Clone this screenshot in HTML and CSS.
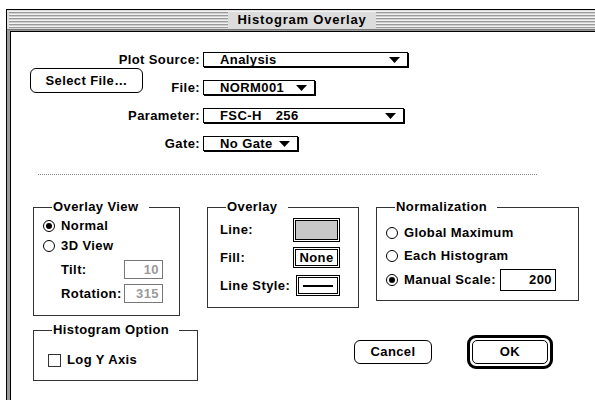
FILE: index.html
```html
<!DOCTYPE html>
<html lang="en">
<head>
<meta charset="utf-8">
<title>Histogram Overlay</title>
<link rel="stylesheet" href="styles.css">
</head>
<body>
<div class="window">
  <div class="titlebar">
    <div class="stripes"><span class="title">Histogram Overlay</span></div>
  </div>
  <div class="frame">
    <div class="content">
      <div class="sources">
        <div class="row">
          <div class="label-cell"><span class="label">Plot Source:</span></div>
          <div class="popup popup-source"><span class="popup-text">Analysis</span><svg class="arrow" width="11" height="6" viewBox="0 0 11 6"><path d="M0 0H11L5.5 6Z"/></svg></div>
        </div>
        <div class="row">
          <div class="label-cell"><div class="btn btn-select">Select File…</div><span class="label">File:</span></div>
          <div class="popup popup-file"><span class="popup-text">NORM001</span><svg class="arrow" width="11" height="6" viewBox="0 0 11 6"><path d="M0 0H11L5.5 6Z"/></svg></div>
        </div>
        <div class="row">
          <div class="label-cell"><span class="label">Parameter:</span></div>
          <div class="popup popup-param"><span class="popup-text wide-gap">FSC-H  256</span><svg class="arrow" width="11" height="6" viewBox="0 0 11 6"><path d="M0 0H11L5.5 6Z"/></svg></div>
        </div>
        <div class="row">
          <div class="label-cell"><span class="label">Gate:</span></div>
          <div class="popup popup-gate"><span class="popup-text">No Gate</span><svg class="arrow" width="11" height="6" viewBox="0 0 11 6"><path d="M0 0H11L5.5 6Z"/></svg></div>
        </div>
      </div>
      <div class="sep"></div>
      <div class="groups-top">
        <div class="group group-view">
          <span class="group-title">Overlay View</span>
          <div class="opt"><span class="radio on"></span>Normal</div>
          <div class="opt opt-2"><span class="radio"></span>3D View</div>
          <div class="field-row field-tilt"><span class="field-label">Tilt:</span><span class="field disabled">10</span></div>
          <div class="field-row field-rot"><span class="field-label">Rotation:</span><span class="field disabled">315</span></div>
        </div>
        <div class="group group-overlay">
          <span class="group-title">Overlay</span>
          <div class="sw-row sw-line"><span>Line:</span><span class="swatch"><span class="swatch-inner gray"></span></span></div>
          <div class="sw-row sw-fill"><span>Fill:</span><span class="swatch"><span class="swatch-inner">None</span></span></div>
          <div class="sw-row sw-style"><span>Line Style:</span><span class="swatch swatch-narrow"><span class="swatch-inner"><span class="line-sample"></span></span></span></div>
        </div>
        <div class="group group-norm">
          <span class="group-title">Normalization</span>
          <div class="opt"><span class="radio"></span>Global Maximum</div>
          <div class="opt opt-n2"><span class="radio"></span>Each Histogram</div>
          <div class="opt opt-n3"><span class="radio on"></span><span class="norm-label">Manual Scale:</span><span class="field scale">200</span></div>
        </div>
      </div>
      <div class="groups-bottom">
        <div class="group group-hist">
          <span class="group-title">Histogram Option</span>
          <div class="opt"><span class="checkbox"></span>Log Y Axis</div>
        </div>
        <div class="btn btn-cancel">Cancel</div>
        <div class="default-ring"><div class="btn btn-ok">OK</div></div>
      </div>
    </div>
  </div>
</div>
</body>
</html>
```

FILE: styles.css
```css
* { box-sizing: border-box; }
html, body { margin: 0; padding: 0; }
body {
  width: 595px;
  height: 400px;
  overflow: hidden;
  background: #fff;
  color: #000;
  font-family: "Liberation Sans", Arial, sans-serif;
  font-weight: bold;
  font-size: 13px;
  letter-spacing: 0.4px;
  line-height: 16px;
}
.window {
  margin: 9px 0 0 6px;
  height: 391px;
  border-top: 1px solid #000;
  border-left: 1px solid #000;
  display: flex;
  flex-direction: column;
}
.titlebar {
  flex: none;
  height: 20px;
  background: #dcdcdc;
  border-bottom: 1px solid #777;
  padding: 1px 0 1px 2px;
}
.stripes {
  height: 100%;
  background: repeating-linear-gradient(to bottom, #f2f2f2 0 1px, #9a9a9a 1px 2px, #cfcfcf 2px 3px);
  display: flex;
  justify-content: center;
  align-items: center;
}
.title {
  background: #dcdcdc;
  padding: 0 9px;
  line-height: 16px;
  letter-spacing: 0.8px;
}
.frame {
  flex: 1;
  display: flex;
  background: #9a9a9a;
  padding: 1px 0 0 3px;
}
.content {
  flex: 1;
  background: #fff;
  border-top: 1px solid #000;
  border-left: 1px solid #000;
  padding-top: 20px;
}
.sources { display: flex; flex-direction: column; gap: 12px; }
.row { display: flex; align-items: flex-start; height: 16px; }
.label-cell {
  width: 189px;
  height: 16px;
  display: flex;
  align-items: center;
  justify-content: flex-end;
}
.label { white-space: nowrap; }
.popup {
  margin-left: 3px;
  height: 15px;
  display: flex;
  align-items: center;
  border: 1px solid #000;
  box-shadow: 1px 1px 0 #000;
  padding: 0 7px 0 16px;
  line-height: 13px;
}
.popup-text { white-space: pre; }
.popup-text.wide-gap { word-spacing: 3px; }
.arrow { margin-left: auto; flex: none; }
.popup-source { width: 205px; }
.popup-file { width: 112px; }
.popup-param { width: 201px; }
.popup-gate { width: 95px; }
.btn {
  border: 1px solid #000;
  border-radius: 6px;
  background: #fff;
  display: flex;
  align-items: center;
  justify-content: center;
}
.btn-select {
  align-self: flex-start;
  margin: -12px auto 0 19px;
  width: 113px;
  height: 25px;
}
.sep {
  margin: 22px 0 0 27px;
  width: 499px;
  height: 0;
  border-top: 1px dotted #888;
}
.groups-top {
  display: flex;
  align-items: flex-start;
  margin-top: 32px;
  padding-left: 22px;
}
.group {
  position: relative;
  flex: none;
  border: 1px solid #333;
}
.group-title {
  position: absolute;
  top: -8px;
  left: 18px;
  background: #fff;
  padding: 0 10px 0 1px;
  line-height: 14px;
  white-space: nowrap;
}
.group-view { width: 147px; height: 109px; padding: 10px 0 0 9px; }
.group-overlay { margin-left: 27px; width: 152px; height: 101px; padding: 10px 18px 0 12px; }
.group-norm { margin-left: 17px; width: 203px; height: 94px; padding: 17px 0 0 9px; }
.opt { display: flex; align-items: center; height: 16px; white-space: nowrap; }
.opt-2 { margin-top: 4px; }
.opt-n2 { margin-top: 7px; }
.opt-n3 { margin-top: 5px; height: 22px; }
.radio {
  flex: none;
  width: 12px;
  height: 12px;
  margin-right: 6px;
  border: 1px solid #000;
  border-radius: 50%;
  display: flex;
  align-items: center;
  justify-content: center;
}
.radio.on::after {
  content: "";
  width: 6px;
  height: 6px;
  border-radius: 50%;
  background: #000;
}
.checkbox {
  flex: none;
  width: 13px;
  height: 13px;
  margin-right: 6px;
  border: 1px solid #333;
}
.field-row { display: flex; align-items: center; height: 19px; padding-left: 18px; }
.field-tilt { margin-top: 6px; }
.field-rot { margin-top: 5px; }
.field-label { width: 63px; white-space: nowrap; }
.field {
  flex: none;
  height: 19px;
  border: 1px solid #000;
  text-align: right;
  padding-right: 3px;
  line-height: 17px;
}
.field.disabled { width: 39px; border-color: #777; color: #9a9a9a; }
.norm-label { width: 96px; }
.field.scale { width: 56px; height: 22px; line-height: 20px; }
.sw-row { display: flex; justify-content: space-between; align-items: center; }
.sw-line { height: 24px; }
.sw-fill { height: 21px; margin-top: 5px; }
.sw-style { height: 21px; margin-top: 7px; }
.swatch {
  width: 47px;
  height: 100%;
  border: 1px solid #000;
  padding: 1px;
  background: #fff;
}
.swatch-narrow { width: 44px; }
.swatch-inner {
  height: 100%;
  border: 1px solid #000;
  display: flex;
  align-items: center;
  justify-content: center;
  line-height: 14px;
}
.swatch-inner.gray { background: #c8c8c8; }
.line-sample { width: 30px; height: 2px; background: #000; }
.groups-bottom {
  display: flex;
  align-items: flex-start;
  margin-top: 14px;
  padding-left: 22px;
}
.group-hist { width: 165px; height: 51px; padding: 21px 0 0 14px; }
.btn-cancel { margin: 10px 0 0 156px; width: 78px; height: 24px; }
.default-ring {
  margin: 5px 0 0 35px;
  width: 86px;
  height: 34px;
  border: 3px solid #000;
  border-radius: 9px;
  padding: 2px;
}
.btn-ok { width: 100%; height: 100%; border-radius: 5px; }
```
